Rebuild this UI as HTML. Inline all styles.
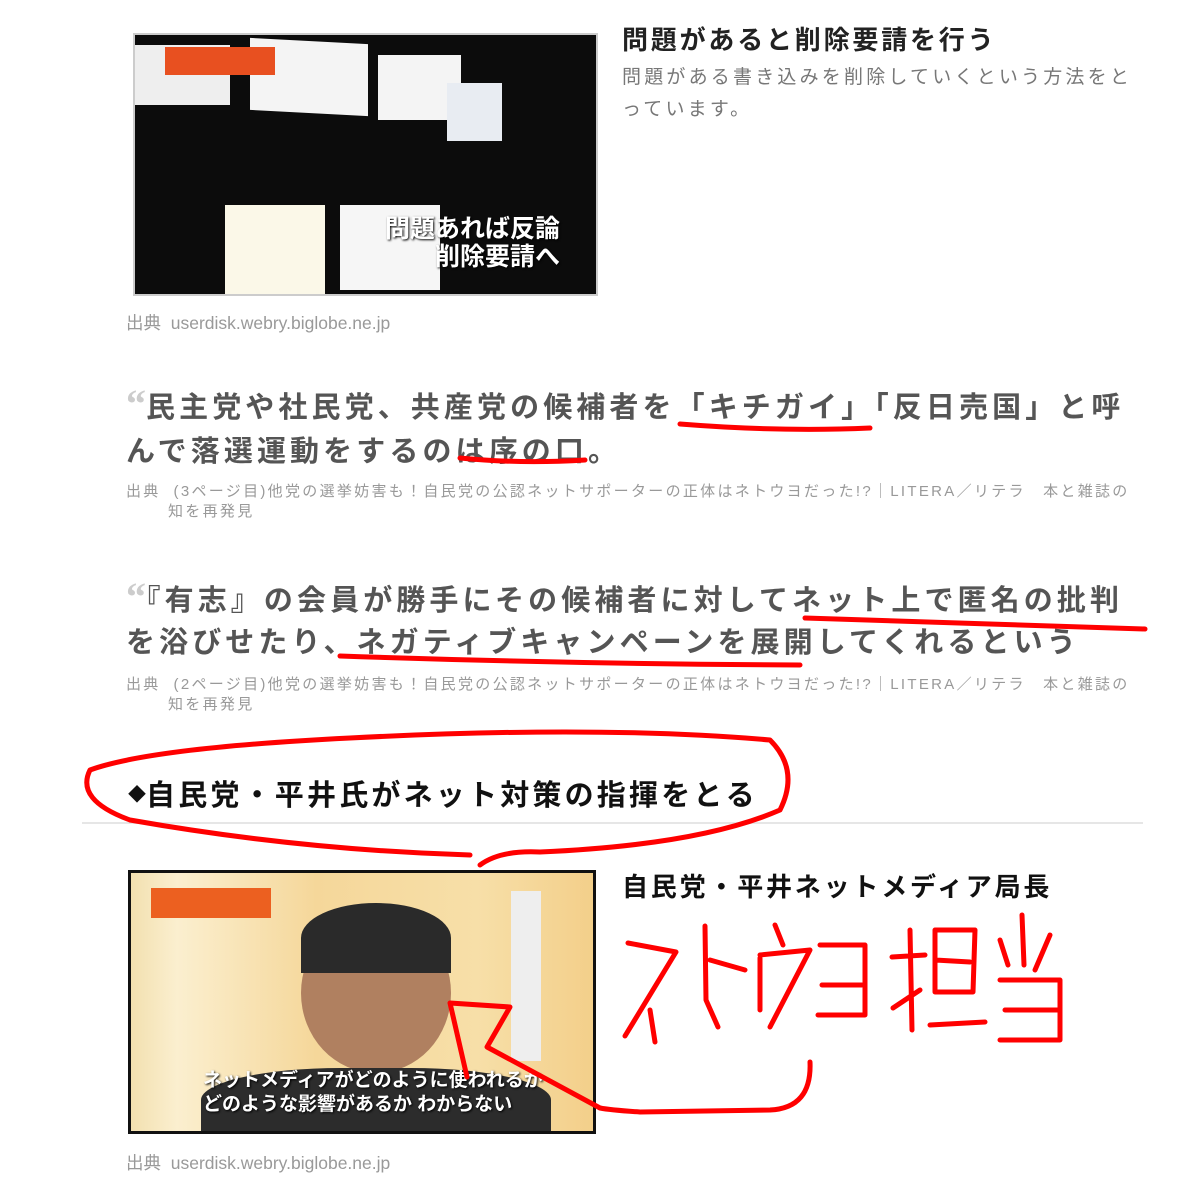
<!DOCTYPE html>
<html><head><meta charset="utf-8"><style>
*{margin:0;padding:0}
body{width:1182px;height:1200px;background:#fff;position:relative;overflow:hidden;font-family:"Liberation Sans","Noto Sans CJK JP",sans-serif}
.a{position:absolute;white-space:nowrap}
.h{font-weight:bold;font-size:26px;color:#222;letter-spacing:2.8px}
.s{font-size:19px;color:#777;line-height:32px;letter-spacing:3.2px}
.c{font-size:17.5px;color:#999}
.q{font-weight:bold;font-size:29px;color:#555;letter-spacing:4.1px}
.cs{font-size:15px;color:#999;line-height:20px;letter-spacing:2.3px}
</style></head><body>
<div class="a" style="left:133px;top:33px;width:465px;height:263px;background:#0c0c0c;border:2px solid #ccc;box-sizing:border-box;overflow:hidden">
 <div class="a" style="left:0;top:10px;width:95px;height:60px;background:#eee"></div>
 <div class="a" style="left:115px;top:6px;width:118px;height:72px;background:#f4f4f4;transform:skewY(3deg)"></div>
 <div class="a" style="left:243px;top:20px;width:83px;height:65px;background:#f4f4f4"></div>
 <div class="a" style="left:312px;top:48px;width:55px;height:58px;background:#e8ecf2"></div>
 <div class="a" style="left:30px;top:12px;width:110px;height:28px;background:#e85020"></div>
 <div class="a" style="left:90px;top:170px;width:100px;height:90px;background:#fbf8e8"></div>
 <div class="a" style="left:205px;top:170px;width:100px;height:85px;background:#f6f6f6"></div>
 <div class="a" style="left:250px;top:180px;color:#fff;font-weight:bold;font-size:25px;line-height:28px;text-align:right;text-shadow:1px 1px 2px #000">問題あれば反論<br>&nbsp;&nbsp;削除要請へ</div>
</div>
<div class="a h" style="left:622px;top:20px">問題があると削除要請を行う</div>
<div class="a s" style="left:622px;top:62px">問題がある書き込みを削除していくという方法をと<br>っています。</div>
<div class="a c" style="left:126px;top:310px">出典&nbsp; userdisk.webry.biglobe.ne.jp</div>

<div class="a q" style="left:126px;top:382px;line-height:44px"><span style="color:#ccc;font-family:'Liberation Serif',serif;font-size:40px;letter-spacing:0">“</span>民主党や社民党、共産党の候補者を「キチガイ」「反日売国」と呼<br>んで落選運動をするのは序の口。</div>
<div class="a cs" style="left:126px;top:482px">出典&nbsp; (3ページ目)他党の選挙妨害も！自民党の公認ネットサポーターの正体はネトウヨだった!?｜LITERA／リテラ　本と雑誌の<br><span style="margin-left:42px">知を再発見</span></div>

<div class="a q" style="left:126px;top:576px;line-height:42px"><span style="color:#ccc;font-family:'Liberation Serif',serif;font-size:40px;letter-spacing:0">“</span>『有志』の会員が勝手にその候補者に対してネット上で匿名の批判<br>を浴びせたり、ネガティブキャンペーンを展開してくれるという</div>
<div class="a cs" style="left:126px;top:675px">出典&nbsp; (2ページ目)他党の選挙妨害も！自民党の公認ネットサポーターの正体はネトウヨだった!?｜LITERA／リテラ　本と雑誌の<br><span style="margin-left:42px">知を再発見</span></div>

<div class="a" style="left:128px;top:772px;font-weight:bold;font-size:29px;color:#111;letter-spacing:3.2px"><span style="font-size:18px;vertical-align:4px;letter-spacing:0">◆</span>自民党・平井氏がネット対策の指揮をとる</div>
<div class="a" style="left:82px;top:822px;width:1061px;height:2px;background:#e6e6e6"></div>

<div class="a" style="left:128px;top:870px;width:468px;height:264px;background:linear-gradient(90deg,#f2e0b0 0%,#fbefcf 10%,#f5d79a 40%,#f7dfa8 75%,#f3cf8a 100%);border:3px solid #111;box-sizing:border-box;overflow:hidden">
 <div class="a" style="left:20px;top:15px;width:120px;height:30px;background:#ec6020"></div>
 <div class="a" style="left:380px;top:18px;width:30px;height:170px;background:#eee"></div>
 <div class="a" style="left:170px;top:40px;width:150px;height:160px;border-radius:50%;background:#b08060"></div>
 <div class="a" style="left:170px;top:30px;width:150px;height:70px;border-radius:50% 50% 0 0;background:#2a2a2a"></div>
 <div class="a" style="left:70px;top:195px;width:350px;height:80px;border-radius:40% 40% 0 0;background:#2c2c2c"></div>
 <div class="a" style="left:72px;top:196px;color:#fff;font-weight:bold;font-size:19px;line-height:24px;text-shadow:1px 1px 2px #000">ネットメディアがどのように使われるか<br>どのような影響があるか わからない</div>
</div>
<div class="a h" style="left:622px;top:867px;color:#111">自民党・平井ネットメディア局長</div>
<div class="a c" style="left:126px;top:1150px">出典&nbsp; userdisk.webry.biglobe.ne.jp</div>

<svg class="a" style="left:0;top:0" width="1182" height="1200" fill="none" stroke="#f00" stroke-width="5" stroke-linecap="round" stroke-linejoin="round">
<path d="M680 424 Q780 432 870 428"/>
<path d="M460 458 Q520 464 585 460"/>
<path d="M805 618 Q980 623 1145 629"/>
<path d="M340 656 Q570 664 800 665"/>
<path d="M480 865 Q500 850 540 852 Q700 845 780 810 Q800 770 770 740 Q600 725 350 738 Q150 748 90 770 Q75 800 130 820 Q300 850 470 855"/>
<path d="M628 943 L676 952 L625 1036 M650 1010 L655 1042"/>
<path d="M705 926 L706 1000 L718 1027 M710 960 L745 970"/>
<path d="M775 925 L783 945 M760 958 L760 1010 M760 955 L810 950 L770 1027"/>
<path d="M820 945 L865 945 L865 1015 M822 985 L862 985 M818 1015 L865 1015"/>
<path d="M892 957 L925 955 M910 930 L912 1030 M893 1008 L920 990"/>
<path d="M935 930 L975 930 L973 992 L935 992 Z M935 960 L970 962 M930 1025 L985 1022"/>
<path d="M1000 940 L1008 965 M1022 915 L1024 965 M1050 935 L1035 970 M1000 980 L1060 980 L1060 1040 M1005 1010 L1058 1010 M1000 1040 L1060 1040"/>
<path d="M810 1062 Q812 1108 770 1110 L640 1112 Q610 1110 600 1108"/>
<path d="M450 1003 L467 1077 M450 1003 L510 1007 L487 1047 L600 1108"/>
</svg>
</body></html>
